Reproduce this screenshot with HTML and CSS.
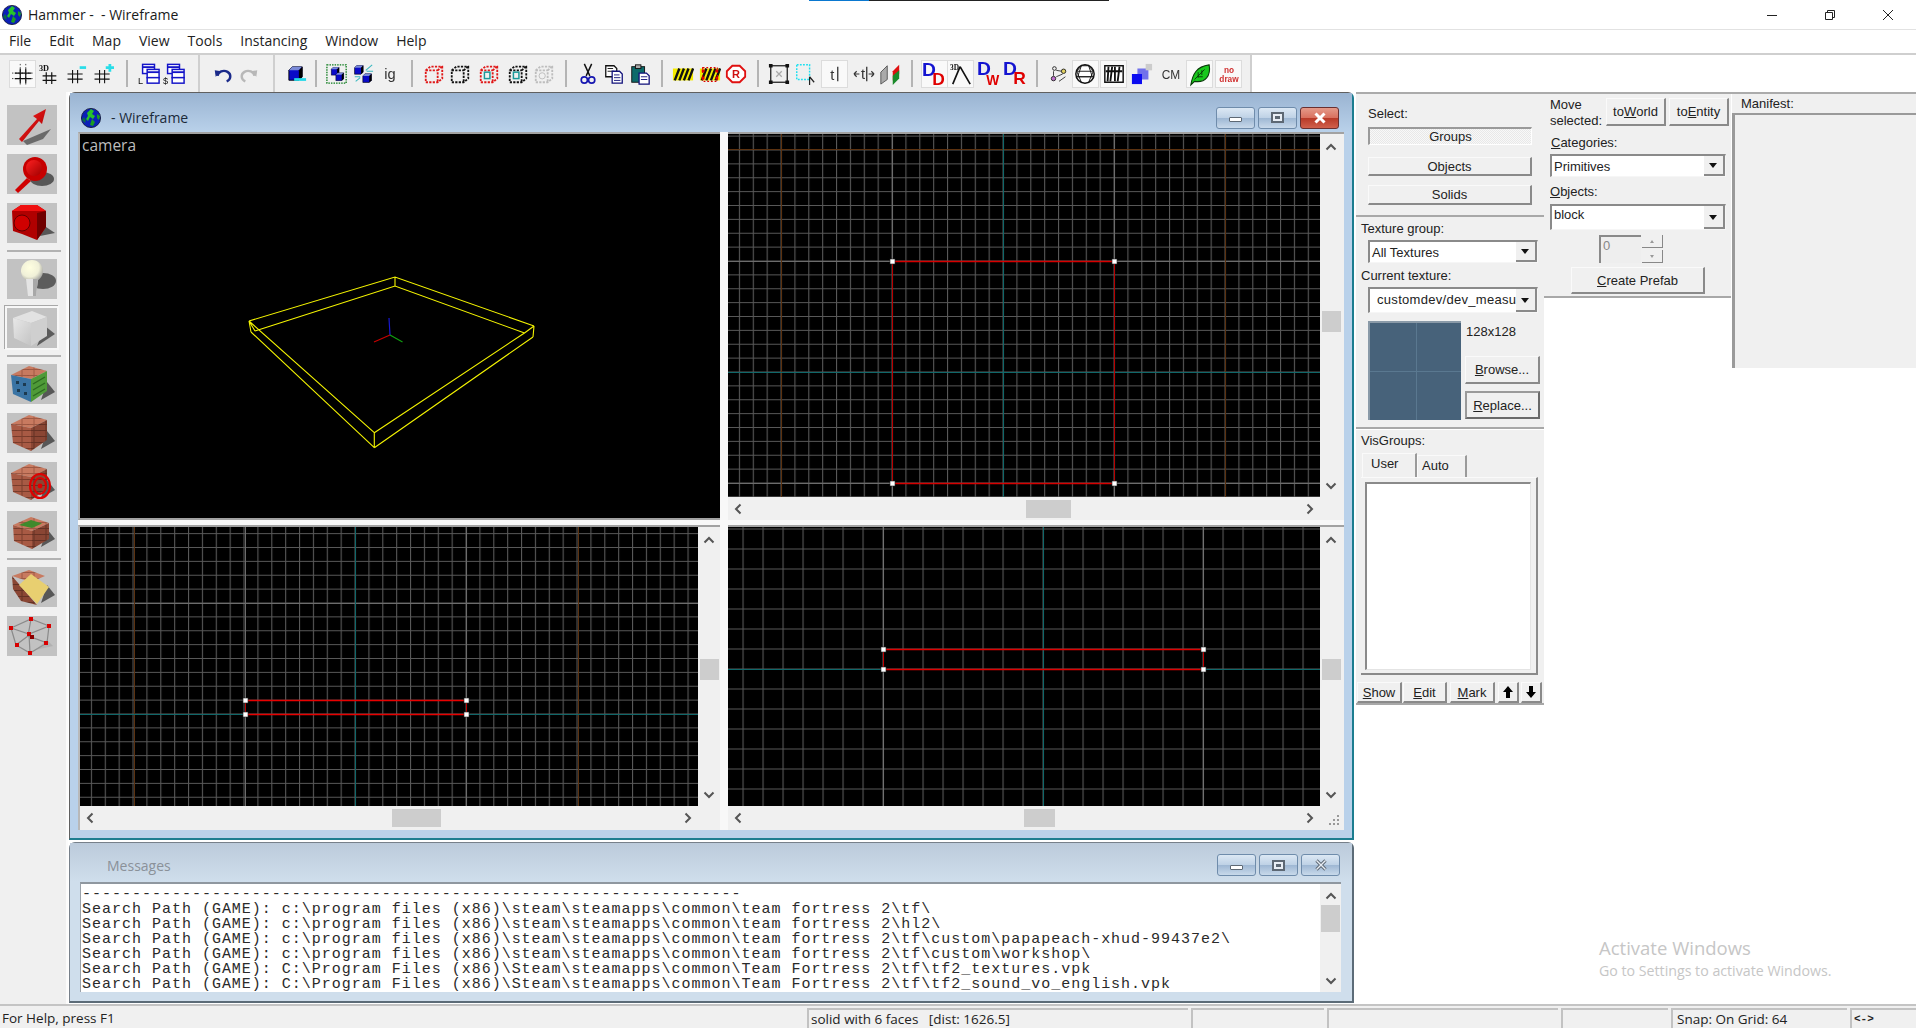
FILE: index.html
```html
<!DOCTYPE html>
<html lang="en">
<head>
<meta charset="utf-8">
<title>Hammer - - Wireframe</title>
<link rel="stylesheet" href="styles.css">
</head>
<body>
<svg class="defs" aria-hidden="true">
  <defs>
    <symbol id="globe" viewBox="0 0 20 20">
      <circle cx="10" cy="10" r="9.6" fill="#0b1fb8" stroke="#0a1030" stroke-width=".8"/>
      <path d="M10 1 L13 3 L11 6 L14 8 L12 11 L9 9 L7 13 L5 11 L7 8 L6 5 Z" fill="#27c22b"/>
      <path d="M11 11 L14 14 L12 18 L9 17 Z M16 6 L19 8 L18 12 L16 10 Z" fill="#1c9c22"/>
      <path d="M3 9 L1 12 L4 15 L5 12 Z" fill="#0a6a4a"/>
    </symbol>
    <symbol id="hash" viewBox="0 0 24 24">
      <path d="M9 6V22M15 6V22M3 11H21M3 17H21" stroke="#111" stroke-width="1.3" fill="none"/>
    </symbol>
    <symbol id="bluewin" viewBox="0 0 24 24">
      <rect x="5" y="1.5" width="13" height="10" fill="#fff" stroke="#1414c8" stroke-width="1.6"/>
      <path d="M5 4.5H18" stroke="#1414c8" stroke-width="2"/>
      <rect x="10" y="7" width="13" height="9" fill="#fff" stroke="#1414c8" stroke-width="1.6"/>
      <path d="M10 10H23" stroke="#1414c8" stroke-width="2"/>
      <rect x="10" y="16" width="13" height="6" fill="#fff" stroke="#1414c8" stroke-width="1.6"/>
    </symbol>
    <symbol id="bluecube" viewBox="0 0 14 14">
      <path d="M1 4 L4 1 H13 V10 L10 13 H1 Z" fill="#0a0ac8" stroke="#000" stroke-width=".8"/>
      <path d="M1 4 L4 1 H13 L10 4 Z" fill="#7a8ad8"/>
      <path d="M10 4 L13 1 V10 L10 13 Z" fill="#000"/>
    </symbol>
    <symbol id="dotcube" viewBox="0 0 24 24">
      <path d="M3 8 L8 4 H21 V17 L16 21 H3 Z M3 8 H16 V21 M16 8 L21 4" fill="none" stroke="currentColor" stroke-width="2" stroke-dasharray="2.4 1.4"/>
    </symbol>
    <symbol id="hatch" viewBox="0 0 24 24">
      <rect x="1" y="6" width="22" height="13" fill="#f5ec00"/>
      <path d="M3 19 L8 6 M8 19 L13 6 M13 19 L18 6 M18 19 L23 6" stroke="#111" stroke-width="2.6"/>
    </symbol>
    <symbol id="chev-u" viewBox="0 0 12 8"><path d="M1.5 6.5 L6 2 L10.5 6.5" fill="none" stroke="#555" stroke-width="2"/></symbol>
    <symbol id="chev-d" viewBox="0 0 12 8"><path d="M1.5 1.5 L6 6 L10.5 1.5" fill="none" stroke="#555" stroke-width="2"/></symbol>
    <symbol id="chev-l" viewBox="0 0 8 12"><path d="M6.5 1.5 L2 6 L6.5 10.5" fill="none" stroke="#555" stroke-width="2"/></symbol>
    <symbol id="chev-r" viewBox="0 0 8 12"><path d="M1.5 1.5 L6 6 L1.5 10.5" fill="none" stroke="#555" stroke-width="2"/></symbol>
    <pattern id="grid-a" width="13.875" height="13.875" patternUnits="userSpaceOnUse" x="274.5" y="237.5">
      <path d="M.5 0V13.875M0 .5H13.875" stroke="#585858" stroke-width="1.2" fill="none"/>
    </pattern>
    <pattern id="grid-b" width="13.875" height="13.875" patternUnits="userSpaceOnUse" x="274.5" y="186.5">
      <path d="M.5 0V13.875M0 .5H13.875" stroke="#585858" stroke-width="1.2" fill="none"/>
    </pattern>
    <pattern id="grid-c" width="20" height="20" patternUnits="userSpaceOnUse" x="14.5" y="1.5">
      <path d="M.5 0V20M0 .5H20" stroke="#585858" stroke-width="1.2" fill="none"/>
    </pattern>
    <linearGradient id="tile-top" x1="0" y1="0" x2="1" y2="1"><stop offset="0" stop-color="#e8e8e8"/><stop offset="1" stop-color="#c4c4c4"/></linearGradient>
    <linearGradient id="red-shade" x1="0" y1="0" x2="1" y2="1"><stop offset="0" stop-color="#ff2020"/><stop offset="1" stop-color="#a00000"/></linearGradient>
    <radialGradient id="white-ball" cx=".4" cy=".35" r=".7"><stop offset="0" stop-color="#ffffe0"/><stop offset=".6" stop-color="#f0f0d8"/><stop offset="1" stop-color="#999"/></radialGradient>
    <pattern id="brick" width="12" height="6" patternUnits="userSpaceOnUse">
      <rect width="12" height="6" fill="#a85a44"/>
      <path d="M0 5.5H12M3 0V5M9 5V6" stroke="#6e3626" stroke-width=".8"/>
    </pattern>
    <pattern id="brick-dark" width="12" height="6" patternUnits="userSpaceOnUse">
      <rect width="12" height="6" fill="#8a4634"/>
      <path d="M0 5.5H12M3 0V5M9 5V6" stroke="#5a2c20" stroke-width=".8"/>
    </pattern>
    <pattern id="brick-top" width="12" height="6" patternUnits="userSpaceOnUse">
      <rect width="12" height="6" fill="#c87a60"/>
      <path d="M0 5.5H12M3 0V5M9 5V6" stroke="#93503c" stroke-width=".8"/>
    </pattern>
  </defs>
</svg>

<div class="app">
  <header class="titlebar">
    <svg class="title-icon"><use href="#globe"/></svg>
    <span class="title-text">Hammer -  - Wireframe</span>
    <div class="caption-btns">
      <svg class="sys-glyph" viewBox="0 0 12 12"><path d="M1 6.5H11" stroke="#222" fill="none"/></svg>
      <svg class="sys-glyph" viewBox="0 0 12 12"><path d="M1.5 3.5H8.5V10.5H1.5ZM3.5 3.5V1.5H10.5V8.5H8.5" stroke="#222" fill="none"/></svg>
      <svg class="sys-glyph" viewBox="0 0 12 12"><path d="M1 1L11 11M11 1L1 11" stroke="#222" fill="none"/></svg>
    </div>
  </header>

  <nav class="menubar">
    <span>File</span><span>Edit</span><span>Map</span><span>View</span><span>Tools</span><span>Instancing</span><span>Window</span><span>Help</span>
  </nav>

  <div class="toolbar">
    <div class="tb hl"><svg viewBox="0 0 24 24"><use href="#hash" width="24" height="24"/><path d="M9 1V24M15 1V24M0 11H24M0 17H24" stroke="#111" stroke-width=".8" stroke-dasharray="1.5 2" fill="none"/></svg></div>
    <div class="tb"><svg viewBox="0 0 24 24"><text x="1" y="9" class="ico-bold">3D</text><path d="M9 10V23M15 10V23M5 14H20M5 19H20" stroke="#111" stroke-width="1.3"/></svg></div>
    <div class="tb"><svg viewBox="0 0 24 24"><use href="#hash" width="22" height="22" y="2"/><path d="M16 5H23" stroke="#2adde8" stroke-width="3"/></svg></div>
    <div class="tb"><svg viewBox="0 0 24 24"><use href="#hash" width="22" height="22" y="2"/><path d="M15 5H24M19.5 1V9.5" stroke="#2adde8" stroke-width="3"/></svg></div>
    <div class="sep"></div>
    <div class="tb"><svg viewBox="0 0 24 24"><use href="#bluewin" width="24" height="24"/><text x="0" y="23" class="ico-sm">L</text></svg></div>
    <div class="tb"><svg viewBox="0 0 24 24"><use href="#bluewin" width="24" height="24"/><text x="0" y="23" class="ico-sm">$</text></svg></div>
    <div class="band"></div>
    <div class="tb"><svg viewBox="0 0 24 24"><path d="M6 14 A7 6 0 1 1 16 20" fill="none" stroke="#1a2a8a" stroke-width="2.6"/><path d="M3 8 L10 9 L4 15 Z" fill="#1a2a8a"/></svg></div>
    <div class="tb"><svg viewBox="0 0 24 24"><path d="M18 14 A7 6 0 1 0 8 20" fill="none" stroke="#b8b8b8" stroke-width="2.6"/><path d="M21 8 L14 9 L20 15 Z" fill="#b8b8b8"/></svg></div>
    <div class="band"></div>
    <div class="tb"><svg viewBox="0 0 24 24"><use href="#bluecube" x="3" y="3" width="17" height="17"/><path d="M10 18H23" stroke="#20d8e8" stroke-width="3"/></svg></div>
    <div class="sep"></div>
    <div class="tb"><svg viewBox="0 0 24 24"><rect x="1" y="2" width="21" height="20" fill="none" stroke="#0a7a1a" stroke-width="1.4" stroke-dasharray="1.6 1.2"/><use href="#bluecube" x="5" y="4" width="10" height="10"/><use href="#bluecube" x="10" y="10" width="10" height="10"/></svg></div>
    <div class="tb"><svg viewBox="0 0 24 24"><use href="#bluecube" x="2" y="2" width="11" height="11"/><use href="#bluecube" x="11" y="11" width="11" height="11"/><path d="M15 8L22 2M16 9H23M3 15H9M4 20L9 16" stroke="#3ab8c0" stroke-width="1.2"/></svg></div>
    <div class="tb"><svg viewBox="0 0 24 24"><text x="12" y="17" class="ico-reg">ig</text></svg></div>
    <div class="sep"></div>
    <div class="tb red"><svg viewBox="0 0 24 24"><use href="#dotcube" width="24" height="24"/></svg></div>
    <div class="tb"><svg viewBox="0 0 24 24"><use href="#dotcube" width="24" height="24"/></svg></div>
    <div class="tb red"><svg viewBox="0 0 24 24"><use href="#dotcube" width="24" height="24"/><rect x="7" y="10" width="6" height="7" fill="none" stroke="#1a9a9a" stroke-width="1.6"/></svg></div>
    <div class="tb"><svg viewBox="0 0 24 24"><use href="#dotcube" width="24" height="24"/><rect x="7" y="10" width="6" height="7" fill="none" stroke="#1a9a9a" stroke-width="1.6"/></svg></div>
    <div class="tb faint"><svg viewBox="0 0 24 24"><use href="#dotcube" width="24" height="24"/><circle cx="10" cy="14" r="3.4" fill="none" stroke="#bbb"/></svg></div>
    <div class="sep"></div>
    <div class="tb"><svg viewBox="0 0 24 24"><path d="M8 1L14 14M16 1L10 14" stroke="#111" stroke-width="1.6" fill="none"/><circle cx="8" cy="18.5" r="3.4" fill="none" stroke="#1616b0" stroke-width="1.8"/><circle cx="16" cy="18.5" r="3.4" fill="none" stroke="#1616b0" stroke-width="1.8"/></svg></div>
    <div class="tb"><svg viewBox="0 0 24 24"><path d="M3 3H12L15 6V15H3Z" fill="#fff" stroke="#111" stroke-width="1.4"/><path d="M5 6H11M5 9H12" stroke="#111"/><path d="M10 9H18L21 12V22H10Z" fill="#fff" stroke="#10107a" stroke-width="1.4"/><path d="M12 13H18M12 16H19M12 19H19" stroke="#10107a"/></svg></div>
    <div class="tb"><svg viewBox="0 0 24 24"><rect x="3" y="4" width="14" height="17" fill="#0c6a6a" stroke="#111"/><rect x="7" y="2" width="6" height="4" fill="#aaa" stroke="#111"/><path d="M11 11H19L22 14V23H11Z" fill="#fff" stroke="#10107a" stroke-width="1.4"/><path d="M13 15H20M13 18H20" stroke="#10107a"/></svg></div>
    <div class="sep"></div>
    <div class="tb"><svg viewBox="0 0 24 24"><use href="#hatch" width="24" height="24"/></svg></div>
    <div class="tb"><svg viewBox="0 0 24 24"><use href="#hatch" width="24" height="24"/><path d="M3 7h3v3h-3zM18 7h3v3h-3zM3 15h3v3h-3zM18 15h3v3h-3z" fill="#e00000"/><path d="M4 5H20V20H4Z" fill="none" stroke="#e00000" stroke-width="1.2" stroke-dasharray="2 2"/></svg></div>
    <div class="tb"><svg viewBox="0 0 24 24"><path d="M8 3H16L22 9V15L16 21H8L2 15V9Z" fill="#fff" stroke="#e01010" stroke-width="2"/><text x="12" y="16" class="ico-r">R</text></svg></div>
    <div class="sep"></div>
    <div class="tb"><svg viewBox="0 0 24 24"><rect x="3" y="3" width="18" height="18" fill="none" stroke="#222" stroke-width="1.4"/><path d="M9 9L15 15M15 9L9 15" stroke="#aaa" stroke-width="1.4"/><path d="M1 1h4v4h-4zM19 1h4v4h-4zM1 19h4v4h-4zM19 19h4v4h-4z" fill="#111"/></svg></div>
    <div class="tb"><svg viewBox="0 0 24 24"><rect x="3" y="2" width="14" height="16" fill="none" stroke="#1fe0f0" stroke-width="1.6" stroke-dasharray="2 1.4"/><path d="M17 15V24M17 15L22 21" stroke="#222" stroke-width="1.3" fill="none"/></svg></div>
    <div class="tb hl"><svg viewBox="0 0 24 24"><text x="9" y="18" class="ico-reg">t</text><path d="M15 4V20" stroke="#333" stroke-width="1.4"/></svg></div>
    <div class="tb"><svg viewBox="0 0 24 24"><text x="11" y="17" class="ico-reg">t</text><path d="M15 4V20" stroke="#333" stroke-width="1.4"/><path d="M1 12H7M1 12L4 9M1 12L4 15M17 12H23M23 12L20 9M23 12L20 15" stroke="#333" stroke-width="1.2" fill="none"/></svg></div>
    <div class="tb"><svg viewBox="0 0 24 24"><path d="M2 10L9 3V18L2 23Z" fill="#aaa" stroke="#555"/><path d="M15 9L22 2V12L15 19Z" fill="#e01010"/><path d="M15 14L22 8V17L15 24Z" fill="#1a8a2a"/></svg></div>
    <div class="sep"></div>
    <div class="tb hl"><svg viewBox="0 0 24 24"><text x="-1" y="14" class="ico-blue">D</text><text x="10" y="24" class="ico-red">D</text></svg></div>
    <div class="tb hl"><svg viewBox="0 0 24 24"><text x="0" y="8" class="ico-3d">3D</text><path d="M11 4L3 23M11 4L22 23" stroke="#111" stroke-width="1.8" fill="none"/></svg></div>
    <div class="tb"><svg viewBox="0 0 24 24"><text x="-1" y="13" class="ico-blue">D</text><text x="9" y="24" class="ico-red-w">W</text></svg></div>
    <div class="tb"><svg viewBox="0 0 24 24"><text x="-1" y="13" class="ico-blue">D</text><text x="10" y="23" class="ico-red">R</text></svg></div>
    <div class="sep"></div>
    <div class="tb"><svg viewBox="0 0 24 24"><circle cx="7" cy="6" r="2" fill="none" stroke="#222"/><circle cx="17" cy="9" r="2.4" fill="#e0d060" stroke="#222"/><circle cx="6" cy="17" r="2.4" fill="#c070d0" stroke="#222"/><path d="M9 8L15 9M16 12L9 15M6 9V14M12 20L19 15" stroke="#333" fill="none"/></svg></div>
    <div class="tb hl"><svg viewBox="0 0 24 24"><circle cx="12" cy="12" r="10" fill="#fff" stroke="#111" stroke-width="1.6"/><path d="M3 9H21M3 15H21M8 3L3 9L8 21M16 3L21 9L16 21M8 3H16L20 15H4Z" fill="none" stroke="#111"/></svg></div>
    <div class="tb hl"><svg viewBox="0 0 24 24"><rect x="2" y="3" width="20" height="18" fill="#fff" stroke="#111" stroke-width="1.6"/><path d="M6 4L5 20M10 4L8 20M13 4L13 20M18 4L16 20M3 9L21 9" stroke="#111" stroke-width="2"/></svg></div>
    <div class="tb"><svg viewBox="0 0 24 24"><rect x="1" y="12" width="11" height="11" fill="#0c0cf0"/><path d="M7 6H19V18H12V12H7Z" fill="#3a3ae8" opacity=".7"/><rect x="16" y="1" width="7" height="7" fill="#ccc"/></svg></div>
    <div class="tb"><svg viewBox="0 0 24 24"><text x="12" y="17" class="ico-cm">CM</text></svg></div>
    <div class="tb hl"><svg viewBox="0 0 24 24"><path d="M2 24C4 12 8 4 22 2C24 14 18 22 6 20Z" fill="#18c81c" stroke="#0a3a0a" stroke-width="1.2"/><path d="M6 18L17 7M10 10V16M14 8V13M9 15H15" stroke="#0a3a0a" fill="none"/></svg></div>
    <div class="tb hl"><svg viewBox="0 0 24 24"><text x="12" y="11" class="ico-nd">no</text><text x="12" y="21" class="ico-nd">draw</text></svg></div>
  </div>

  <main class="workspace">
    <aside class="tools">
      <div class="tool"><svg viewBox="0 0 50 40"><path d="M16 36 L44 24 L36 34 L20 40 Z" fill="#444" opacity=".7"/><path d="M12 34 L30 14 L26 11 L39 4 L35 19 L32 16 L15 37 Z" fill="url(#red-shade)"/></svg></div>
      <div class="tool"><svg viewBox="0 0 50 40"><ellipse cx="35" cy="25" rx="12" ry="7" fill="#333" opacity=".75"/><path d="M8 36 L20 24 L24 27 L11 39 Z" fill="#d00000"/><circle cx="28" cy="15" r="12" fill="#c60000"/><circle cx="27" cy="14" r="8" fill="url(#red-shade)"/></svg></div>
      <div class="tool"><svg viewBox="0 0 50 40"><path d="M28 34 L48 30 L36 22 Z" fill="#333" opacity=".75"/><path d="M5 8 L14 2 H30 L39 8 V24 L30 37 L15 31 L6 28 Z" fill="#b00000"/><path d="M5 8 H30 L39 8 L30 2 H14 Z" fill="#ef1010"/><path d="M30 10 L39 8 V24 L30 37 Z" fill="#700000"/><circle cx="15" cy="20" r="8" fill="#d00000" stroke="#600000"/></svg></div>
      <div class="tool-sep"></div>
      <div class="tool"><svg viewBox="0 0 50 40"><ellipse cx="36" cy="22" rx="13" ry="8" fill="#3a3a3a" opacity=".75"/><circle cx="25" cy="12" r="11" fill="url(#white-ball)"/><path d="M19 20 H31 L29 37 H21 Z" fill="#e4e4e4"/><path d="M26 20 H31 L29 37 H26 Z" fill="#a8a8a8"/></svg></div>
      <div class="tool active"><svg viewBox="0 0 50 40"><path d="M30 38 L48 26 L38 18 Z" fill="#3a3a3a" opacity=".75"/><path d="M6 10 L25 3 L40 9 L24 15 Z" fill="#e2e2e2"/><path d="M6 10 L24 15 L24 38 L7 30 Z" fill="url(#tile-top)"/><path d="M24 15 L40 9 V28 L24 38 Z" fill="#cfcfcf"/></svg></div>
      <div class="tool-sep"></div>
      <div class="tool"><svg viewBox="0 0 50 40"><path d="M34 36 L48 28 L40 18 Z" fill="#333" opacity=".75"/><path d="M4 11 L22 2 L40 7 L24 15 Z" fill="url(#brick-top)"/><path d="M4 11 L24 15 V38 L6 30 Z" fill="#3a74a4"/><path d="M24 15 L40 7 V27 L24 38 Z" fill="#4f9a38"/><path d="M9 17h3v3h-3zM16 19h3v3h-3zM10 25h3v3h-3zM17 28h3v3h-3z" fill="#1c3a50"/><path d="M26 20 L38 13 M26 26 L38 19 M26 32 L38 25" stroke="#2c6a20" stroke-width="1.4"/></svg></div>
      <div class="tool"><svg viewBox="0 0 50 40"><path d="M34 36 L48 28 L40 18 Z" fill="#333" opacity=".75"/><path d="M4 11 L22 2 L40 7 L24 15 Z" fill="url(#brick-top)"/><path d="M4 11 L24 15 V38 L6 30 Z" fill="url(#brick)"/><path d="M24 15 L40 7 V27 L24 38 Z" fill="url(#brick-dark)"/></svg></div>
      <div class="tool"><svg viewBox="0 0 50 40"><path d="M34 36 L48 28 L40 18 Z" fill="#333" opacity=".75"/><path d="M4 11 L22 2 L40 7 L24 15 Z" fill="url(#brick-top)"/><path d="M4 11 L24 15 V38 L6 30 Z" fill="url(#brick)"/><path d="M24 15 L40 7 V27 L24 38 Z" fill="url(#brick-dark)"/><ellipse cx="33" cy="24" rx="10" ry="12" fill="none" stroke="#e00000" stroke-width="2"/><ellipse cx="33" cy="24" rx="6" ry="8" fill="none" stroke="#e00000" stroke-width="2"/><circle cx="33" cy="24" r="2.4" fill="#e00000"/></svg></div>
      <div class="tool"><svg viewBox="0 0 50 40"><path d="M34 36 L48 28 L40 18 Z" fill="#333" opacity=".75"/><path d="M6 14 L24 6 L42 12 L25 20 Z" fill="url(#brick-top)"/><path d="M12 14 L24 9 L35 12.5 L25 17 Z" fill="#3f8a2c"/><path d="M6 14 L25 20 V38 L7 30 Z" fill="url(#brick)"/><path d="M25 20 L42 12 V28 L25 38 Z" fill="url(#brick-dark)"/></svg></div>
      <div class="tool-sep"></div>
      <div class="tool"><svg viewBox="0 0 50 40"><path d="M34 36 L48 28 L40 18 Z" fill="#333" opacity=".75"/><path d="M5 9 L22 3 L38 9 L24 15 Z" fill="url(#brick-top)"/><path d="M5 9 L30 38 L14 34 L6 22 Z" fill="url(#brick-dark)"/><path d="M24 7 L42 20 L30 37 L12 18 Z" fill="#e8cf70"/></svg></div>
      <div class="tool"><svg viewBox="0 0 50 40"><g fill="none" stroke="#8a8a8a" stroke-width="1.2"><path d="M4 12 L24 3 L42 10 L22 18 Z"/><path d="M9 29 L23 37 L40 27 L21 20 Z"/><path d="M4 12 L9 29M24 3 L21 20M42 10 L40 27M22 18 L23 37"/></g><path d="M28 34 L46 30 L40 24 Z" fill="#999" opacity=".4"/><g fill="#d80000"><rect x="2" y="10" width="4" height="4"/><rect x="22" y="1" width="4" height="4"/><rect x="40" y="8" width="4" height="4"/><rect x="20" y="16" width="4" height="4"/><rect x="8" y="27" width="4" height="4"/><rect x="23" y="19" width="4" height="4" fill="#8a0000"/><rect x="37" y="25" width="4" height="4"/><rect x="21" y="35" width="4" height="4"/></g></svg></div>
    </aside>

    <section class="mdi">
      <article class="win win-main">
        <div class="win-title">
          <svg class="win-icon"><use href="#globe"/></svg>
          <span class="win-label">- Wireframe</span>
          <div class="win-btns">
            <button class="cap"><i class="g-min"></i></button>
            <button class="cap"><i class="g-max"></i></button>
            <button class="cap close"><svg viewBox="0 0 14 12"><path d="M2.5 1.5L11.5 10.5M11.5 1.5L2.5 10.5" stroke="#fff" stroke-width="3"/></svg></button>
          </div>
        </div>
        <div class="client">
          <div class="pane camera">
            <svg class="view" viewBox="0 0 640 384">
              <text x="2" y="17" class="cam-label">camera</text>
              <path d="M169 187L315 143L454 192M175 197L315 152L444.5 199M169 187L294.3 298.7M171 198L294.3 313.7M444.5 199L294.3 298.7M453 203L294.3 313.7M315 143V152M294.3 298.7V313.7M169 187L171 198M454 192L453 203M169 187L175 197M444.5 199L454 192" fill="none" stroke="#f4f400" stroke-width="1.1"/>
              <path d="M310 201L309 184" stroke="#1818d0" stroke-width="1.2"/>
              <path d="M310 201L294 208" stroke="#c80000" stroke-width="1.2"/>
              <path d="M310 201L322.5 208" stroke="#10a010" stroke-width="1.2"/>
            </svg>
          </div>
          <div class="pane view2d pane-tr">
            <svg class="view" viewBox="0 0 592 363">
              <rect width="592" height="363" fill="url(#grid-a)"/>
              <path d="M164.5 0V363M386.5 0V363M0 127.5H592M0 349.5H592" stroke="#6c6c6c"/>
              <path d="M53.5 0V363M497.5 0V363M0 15.5H592" stroke="#5c3210"/>
              <path d="M275.5 0V363M0 238.5H592" stroke="#10686a"/>
              <path d="M164.5 127.5H386.5M164.5 349.5H386.5" stroke="#d80000" stroke-width="1.4"/>
              <path d="M164.5 127.5V349.5M386.5 127.5V349.5" stroke="#b80000"/>
              <g class="handles"><rect x="162" y="125" width="5" height="5"/><rect x="384" y="125" width="5" height="5"/><rect x="162" y="347" width="5" height="5"/><rect x="384" y="347" width="5" height="5"/></g>
            </svg>
            <div class="vbar"><svg class="chv"><use href="#chev-u"/></svg><div class="thumb-v"></div><svg class="chv"><use href="#chev-d"/></svg></div>
            <div class="hbar"><svg class="chh"><use href="#chev-l"/></svg><div class="thumb-h"></div><svg class="chh"><use href="#chev-r"/></svg></div>
          </div>
          <div class="pane view2d pane-bl">
            <svg class="view" viewBox="0 0 618 279">
              <rect width="618" height="279" fill="url(#grid-b)"/>
              <path d="M165.5 0V279M386.5 0V279M0 76.5H618" stroke="#6c6c6c"/>
              <path d="M54.5 0V279M498.5 0V279" stroke="#5c3210"/>
              <path d="M275.5 0V279M0 187.5H618" stroke="#10686a"/>
              <path d="M165.5 173.5H386.5M165.5 187.5H386.5" stroke="#e80000" stroke-width="1.4"/>
              <path d="M165.5 173.5V187.5M386.5 173.5V187.5" stroke="#b80000"/>
              <g class="handles"><rect x="163" y="171" width="5" height="5"/><rect x="384" y="171" width="5" height="5"/><rect x="163" y="185" width="5" height="5"/><rect x="384" y="185" width="5" height="5"/></g>
            </svg>
            <div class="vbar"><svg class="chv"><use href="#chev-u"/></svg><div class="thumb-v"></div><svg class="chv"><use href="#chev-d"/></svg></div>
            <div class="hbar"><svg class="chh"><use href="#chev-l"/></svg><div class="thumb-h"></div><svg class="chh"><use href="#chev-r"/></svg></div>
          </div>
          <div class="pane view2d pane-br">
            <svg class="view" viewBox="0 0 592 279">
              <rect width="592" height="279" fill="url(#grid-c)"/>
              <path d="M155.5 0V279M475.5 0V279" stroke="#707070"/>
              <path d="M315.5 0V279M0 142.5H592" stroke="#10686a"/>
              <path d="M155.5 122.5H475.5M155.5 142.5H475.5" stroke="#e00000" stroke-width="1.4"/>
              <path d="M155.5 122.5V142.5M475.5 122.5V142.5" stroke="#c00000"/>
              <g class="handles"><rect x="153" y="120" width="5" height="5"/><rect x="473" y="120" width="5" height="5"/><rect x="153" y="140" width="5" height="5"/><rect x="473" y="140" width="5" height="5"/></g>
            </svg>
            <div class="vbar"><svg class="chv"><use href="#chev-u"/></svg><div class="thumb-v"></div><svg class="chv"><use href="#chev-d"/></svg></div>
            <div class="hbar"><svg class="chh"><use href="#chev-l"/></svg><div class="thumb-h"></div><svg class="chh"><use href="#chev-r"/></svg></div>
            <svg class="grip" viewBox="0 0 12 12"><path d="M9 1h2v2h-2zM5 5h2v2h-2zM9 5h2v2h-2zM1 9h2v2h-2zM5 9h2v2h-2zM9 9h2v2h-2z" fill="#999"/></svg>
          </div>
        </div>
      </article>

      <article class="win win-msg">
        <div class="win-title">
          <span class="win-label">Messages</span>
          <div class="win-btns">
            <button class="cap"><i class="g-min"></i></button>
            <button class="cap"><i class="g-max"></i></button>
            <button class="cap"><svg viewBox="0 0 14 12"><path d="M2.5 1.5L11.5 10.5M11.5 1.5L2.5 10.5" stroke="#5d6874" stroke-width="3.2"/><path d="M2.5 1.5L11.5 10.5M11.5 1.5L2.5 10.5" stroke="#e8eef5" stroke-width="1.4"/></svg></button>
          </div>
        </div>
        <div class="log">
          <pre class="log-text">------------------------------------------------------------------
Search Path (GAME): c:\program files (x86)\steam\steamapps\common\team fortress 2\tf\
Search Path (GAME): c:\program files (x86)\steam\steamapps\common\team fortress 2\hl2\
Search Path (GAME): c:\program files (x86)\steam\steamapps\common\team fortress 2\tf\custom\papapeach-xhud-99437e2\
Search Path (GAME): c:\program files (x86)\steam\steamapps\common\team fortress 2\tf\custom\workshop\
Search Path (GAME): C:\Program Files (x86)\Steam\steamapps\common\Team Fortress 2\tf\tf2_textures.vpk
Search Path (GAME): C:\Program Files (x86)\Steam\steamapps\common\Team Fortress 2\tf\tf2_sound_vo_english.vpk</pre>
          <div class="log-bar"><svg class="chv"><use href="#chev-u"/></svg><div class="log-thumb"></div><svg class="chv"><use href="#chev-d"/></svg></div>
        </div>
      </article>
    </section>

    <section class="side">
      <div class="col col-left">
        <div class="panel select-panel">
          <div class="lbl">Select:</div>
          <button class="wbtn sel-groups">Groups</button>
          <button class="wbtn sel-objects">Objects</button>
          <button class="wbtn sel-solids">Solids</button>
        </div>
        <div class="panel texture-panel">
          <div class="lbl">Texture group:</div>
          <div class="combo combo-tex"><span class="combo-val">All Textures</span><span class="combo-arrow"></span></div>
          <div class="lbl lbl-cur">Current texture:</div>
          <div class="combo combo-cur"><span class="combo-val indent">customdev/dev_measu</span><span class="combo-arrow"></span></div>
          <div class="tex-row">
            <div class="tex-preview"></div>
            <div class="tex-side">
              <div class="tex-size">128x128</div>
              <button class="wbtn tex-browse"><u>B</u>rowse...</button>
              <button class="wbtn tex-replace"><u>R</u>eplace...</button>
            </div>
          </div>
        </div>
        <div class="panel vis-panel">
          <div class="lbl">VisGroups:</div>
          <div class="tabs"><span class="tab tab-on">User</span><span class="tab">Auto</span></div>
          <div class="vis-box"><div class="vis-list"></div></div>
          <div class="vis-btns">
            <button class="wbtn v-show"><u>S</u>how</button>
            <button class="wbtn v-edit"><u>E</u>dit</button>
            <button class="wbtn v-mark"><u>M</u>ark</button>
            <button class="wbtn v-arrow"><svg viewBox="0 0 12 14"><path d="M6 1L11 7H8V13H4V7H1Z" fill="#000"/></svg></button>
            <button class="wbtn v-arrow"><svg viewBox="0 0 12 14"><path d="M6 13L11 7H8V1H4V7H1Z" fill="#000"/></svg></button>
          </div>
        </div>
      </div>

      <div class="col col-mid">
        <div class="panel move-panel">
          <div class="move-row">
            <div class="move-lbl">Move<br>selected:</div>
            <button class="wbtn mv-world">to<u>W</u>orld</button>
            <button class="wbtn mv-entity">to<u>E</u>ntity</button>
          </div>
          <div class="lbl lbl-cat"><u>C</u>ategories:</div>
          <div class="combo combo-cat"><span class="combo-val">Primitives</span><span class="combo-arrow"></span></div>
          <div class="lbl lbl-obj"><u>O</u>bjects:</div>
          <div class="combo combo-obj"><span class="combo-val up">block</span><span class="combo-arrow"></span></div>
          <div class="spin-row">
            <div class="spin-edit">0</div>
            <div class="spin-btns"><span class="spin-b"><i class="tri-up"></i></span><span class="spin-b"><i class="tri-dn"></i></span></div>
          </div>
          <button class="wbtn prefab"><u>C</u>reate Prefab</button>
        </div>
      </div>

      <div class="col col-right">
        <div class="manifest-head">Manifest:</div>
        <div class="manifest-body"></div>
      </div>
    </section>
  </main>

  <footer class="status">
    <div class="st st-plain">For Help, press F1</div>
    <div class="st">solid with 6 faces   [dist: 1626.5]</div>
    <div class="st"></div>
    <div class="st"></div>
    <div class="st"></div>
    <div class="st st-snap">Snap: On Grid: 64</div>
    <div class="st st-mono">&lt;-&gt;</div>
  </footer>

  <div class="watermark">
    <div class="wm-big">Activate Windows</div>
    <div class="wm-small">Go to Settings to activate Windows.</div>
  </div>
  <div class="loadbar"></div>
</div>
</body>
</html>
```

FILE: styles.css
```css
* { box-sizing: border-box; }
html, body { margin: 0; padding: 0; background: #fff; }
body { width: 1916px; height: 1028px; overflow: hidden; font-family: "Liberation Sans", Arial, sans-serif; font-size: 13px; color: #111; }
.defs { display: block; width: 0; height: 0; overflow: hidden; }
button { font: inherit; color: inherit; padding: 0; margin: 0; }

.app { position: relative; width: 1916px; height: 1028px; display: flex; flex-direction: column; overflow: hidden; }

/* title + menu */
.titlebar { height: 30px; flex: none; display: flex; align-items: center; padding-left: 2px; border-bottom: 1px solid #e2e2e2; background: #fff; }
.title-icon { width: 20px; height: 20px; flex: none; }
.title-text { margin-left: 6px; font-family: "Open Sans", sans-serif; font-size: 14px; white-space: pre; color: #1a1a1a; }
.caption-btns { margin-left: auto; display: flex; }
.sys-glyph { width: 12px; height: 12px; }
.caption-btns .sys-glyph:nth-child(1) { margin-right: 23px; }
.caption-btns .sys-glyph:nth-child(2) { margin-left: 23px; margin-right: 23px; }
.caption-btns .sys-glyph:nth-child(3) { margin-left: 23px; margin-right: 22px; }

.menubar { height: 25px; flex: none; display: flex; align-items: center; gap: 18px; padding: 0 0 2px 9px; border-bottom: 2px solid #cfcfcf; font-family: "Open Sans", sans-serif; font-size: 14px; color: #222; background: #fff; }

/* toolbar */
.toolbar { height: 37px; width: 1252px; flex: none; display: grid; align-items: center; justify-items: center; background: #f0f0f0; border-right: 2px solid #cfcfcf; padding-left: 9px;
  grid-template-columns: 27px 26.25px 28px 25.75px 21px 24.25px 26px 22.75px 25.5px 26px 24px 21.25px 18.5px 23.75px 28.5px 24px 20px 24.5px 28.5px 28.75px 28.5px 23.75px 20px 24.5px 27.5px 24px 20px 23.5px 29px 24.5px 19px 23.25px 29px 29.75px 28.5px 23.5px 20.5px 24.5px 28px 28.75px 24px 20px 24px 28.25px 28.5px 28.3px 29px 29.2px 29px; }
.tb { width: 27px; height: 28px; display: flex; align-items: center; justify-content: center; }
.tb svg { width: 22px; height: 22px; overflow: visible; filter: blur(.25px); }
.tb.hl { background: #f9f9f9; border: 1px solid #dcdcdc; }
.tb.red { color: #e01818; }
.tb.faint { color: #bdbdbd; }
.sep { width: 2px; height: 27px; background: #b4b4b4; }
.band { width: 2px; height: 37px; background: #cfcfcf; }
.ico-bold { font: bold 9px "Liberation Serif", serif; fill: #111; }
.ico-sm { font: 10px "Liberation Sans", sans-serif; fill: #111; }
.ico-reg { font: 16px "Liberation Sans", sans-serif; fill: #333; text-anchor: middle; }
.ico-r { font: bold 12px "Liberation Sans", sans-serif; fill: #d01010; text-anchor: middle; }
.ico-blue { font: bold 21px "Liberation Sans", sans-serif; fill: #1414d0; }
.ico-red { font: bold 19px "Liberation Sans", sans-serif; fill: #e00000; }
.ico-red-w { font: bold 15px "Liberation Sans", sans-serif; fill: #e00000; }
.ico-3d { font: bold 8px "Liberation Serif", serif; fill: #111; }
.ico-cm { font: 13px "Liberation Sans", sans-serif; fill: #333; text-anchor: middle; }
.ico-nd { font: bold 9px "Liberation Sans", sans-serif; fill: #d03030; text-anchor: middle; }

/* workspace */
.workspace { flex: 1; min-height: 0; display: flex; }

.tools { width: 68px; flex: none; background: #f0f0f0; display: flex; flex-direction: column; align-items: flex-start; padding: 13px 0 0 7px; border-right: 2px solid #fbfbfb; }
.tool { width: 50px; height: 40px; background: #c2c2c2; margin-bottom: 9px; flex: none; }
.tool svg { display: block; width: 50px; height: 40px; filter: blur(.6px); }
.tool.active { outline: 1px dotted #f8f8f8; box-shadow: 0 0 0 2px #f7f7f7, -1px -1px 0 2px #a8a8a8; }
.tool-sep { width: 54px; height: 2px; margin: -2px 0 7px 0; background: #b2b2b2; flex: none; }

.mdi { width: 1288px; flex: none; display: flex; flex-direction: column; gap: 2px; padding-left: 1px; padding-right: 2px; }
.win { background: #b9d1ea; border: 1px solid #606060; border-radius: 6px 6px 0 0; border-right: 2px solid #1c7d90; border-bottom: 2px solid #1c7d90; display: flex; flex-direction: column; }
.win-main { height: 748px; }
.win-msg { height: 161px; background: #cfdeec; border-color: #77808a; border-right-color: #5c6c78; border-bottom-color: #5c6c78; }
.win-title { flex: none; height: 39px; display: flex; align-items: center; padding: 10px 0 0 11px; background: linear-gradient(#9ab4d2, #b9d1ea); }
.win-msg .win-title { padding: 5px 0 0 37px; background: linear-gradient(#bccbdb, #cfdeec); }
.win-icon { width: 20px; height: 20px; }
.win-label { margin-left: 10px; font-family: "Open Sans", sans-serif; font-size: 14px; color: #1b2a3a; }
.win-msg .win-label { margin-left: 0; color: #8a9199; }
.win-btns { margin-left: auto; display: flex; gap: 3px; padding-right: 12px; }
.win-main .win-btns { padding-right: 13px; }
.cap { width: 39px; height: 22px; border: 1px solid #6f8cab; border-radius: 3px; background: linear-gradient(#dce8f4 0, #bfd2e6 48%, #9fb8d4 52%, #c8d9ea 100%); display: flex; align-items: center; justify-content: center; }
.cap.close { background: linear-gradient(#e49a8a 0, #d9715f 48%, #b83a28 52%, #d0604c 100%); border-color: #6a3030; }
.cap svg { width: 14px; height: 12px; }
.g-min { display: block; width: 13px; height: 5px; margin-top: 4px; background: #fff; border: 1px solid #5d6874; border-radius: 1px; }
.g-max { display: block; width: 13px; height: 11px; background: #c8d9ea; border: 2px solid #5d6874; box-shadow: inset 0 0 0 2px #e8eef5, inset 0 0 0 4px #5d6874; }

.client { flex: 1; min-height: 0; margin: 0 8px 8px 8px; display: grid; grid-template-columns: 642px 616px; grid-template-rows: 388px 305px; column-gap: 8px; row-gap: 5px; background: #f8f8f8; width: 1266px; }

.pane { position: relative; min-width: 0; min-height: 0; background: #f0f0f0; border-top: 2px solid #a2a2a2; border-left: 2px solid #b8b8b8; }
.view { display: block; background: #000; }
.camera { border-bottom: 2px solid #a2a2a2; }
.camera .view { width: 640px; height: 384px; }
.cam-label { font: 15.5px "Open Sans", sans-serif; fill: #bdbdbd; }
.view2d { display: grid; }
.view2d .view { width: 100%; height: 100%; }
.handles rect { fill: #fff; stroke: #222; stroke-width: .6; }
.pane-tr { grid-template-columns: 592px 22px; grid-template-rows: 363px 23px; border-left: 0; }
.pane-bl { grid-template-columns: 618px 22px; grid-template-rows: 279px 24px; }
.pane-br { grid-template-columns: 592px 22px; grid-template-rows: 279px 24px; border-left: 0; }

.vbar { display: flex; flex-direction: column; align-items: center; justify-content: flex-start; background: #f0f0f0; padding: 9px 0 7px; }
.hbar { display: flex; align-items: center; background: #f0f0f0; padding: 0 6px; grid-column: 1 / span 1; }
.chv { width: 12px; height: 8px; flex: none; }
.chh { width: 8px; height: 12px; flex: none; }
.vbar .chv:last-child, .log-bar .chv:last-child { margin-top: auto; }
.hbar .chh:last-child { margin-left: auto; }
.thumb-v { width: 19px; height: 21px; background: #cdcdcd; flex: none; margin-top: 160px; }
.pane-bl .thumb-v, .pane-br .thumb-v { margin-top: 115px; }
.thumb-h { height: 18px; background: #cdcdcd; flex: none; }
.pane-tr .thumb-h { width: 45px; margin-left: 284px; }
.pane-bl .thumb-h { width: 49px; margin-left: 298px; }
.pane-br .thumb-h { width: 31px; margin-left: 282px; }
.grip { position: absolute; right: 4px; bottom: 4px; width: 12px; height: 12px; }

.log { flex: 1; min-height: 0; margin: 0 11px 9px 10px; display: flex; background: #fff; border-top: 2px solid #8f979f; border-left: 1px solid #9aa2aa; }
.log-text { margin: 0; flex: 1; min-width: 0; height: 108px; overflow: hidden; padding: 3px 0 0 1px; font-family: "Liberation Mono", "Courier New", monospace; font-size: 15px; line-height: 15px; letter-spacing: .99px; color: #2a2a2a; }
.log-bar { width: 21px; flex: none; background: #f0f0f0; display: flex; flex-direction: column; align-items: center; padding: 8px 0 7px; }
.log-thumb { width: 19px; height: 27px; background: #cdcdcd; margin-top: 5px; flex: none; }

/* side */
.side { flex: 1; min-width: 0; display: flex; align-items: flex-start; border-top: 2px solid #ababab; height: 100%; }
.col { flex: none; }
.col-left { width: 188px; }
.col-mid { width: 187px; }
.col-right { width: 185px; }
.panel { background: #f0f0f0; border-bottom: 2px solid #a8a8a8; }
.lbl { line-height: 16px; color: #222; white-space: nowrap; }
.wbtn { display: flex; align-items: center; justify-content: center; background: #f0f0f0; border: 0; border-right: 2px solid #8a8a8a; border-bottom: 2px solid #8a8a8a; border-top: 1px solid #fafafa; border-left: 1px solid #fafafa; color: #222; white-space: nowrap; }

.select-panel { height: 123px; padding: 12px 0 0 12px; }
.select-panel .wbtn { width: 164px; }
.sel-groups { height: 18px; margin-top: 5px; border: 0; border-top: 2px solid #9a9a9a; border-left: 2px solid #9a9a9a; border-right: 1px solid #fff; border-bottom: 1px solid #fff; background: repeating-conic-gradient(#e8e8e8 0 25%, #f8f8f8 0 50%) 0 0 / 2px 2px; }
.sel-objects { height: 19px; margin-top: 12px; }
.sel-solids { height: 20px; margin-top: 9px; }

.texture-panel { height: 212px; padding: 4px 5px 0 5px; }
.combo { display: flex; align-items: stretch; background: #fff; border-top: 2px solid #8a8a8a; border-left: 2px solid #8a8a8a; border-right: 1px solid #f6f6f6; border-bottom: 1px solid #f6f6f6; overflow: hidden; }
.combo-val { flex: 1; min-width: 0; overflow: hidden; white-space: nowrap; padding-left: 2px; line-height: 21px; color: #222; }
.combo-val.indent { padding-left: 7px; letter-spacing: .3px; }
.combo-val.up { line-height: 18px; }
.combo-arrow { width: 21px; flex: none; background: #f0f0f0; border-right: 2px solid #8a8a8a; border-bottom: 2px solid #8a8a8a; position: relative; }
.combo-arrow::after { content: ""; position: absolute; left: 5px; top: 50%; margin-top: -2px; border: 4px solid transparent; border-top: 5px solid #111; border-bottom: 0; }
.combo-tex { width: 170px; height: 23px; margin: 3px 0 0 7px; }
.lbl-cur { margin-top: 5px; }
.combo-cur { width: 170px; height: 26px; margin: 3px 0 0 7px; }
.combo-cur .combo-val { line-height: 22px; }
.tex-row { display: flex; margin: 8px 0 0 7px; }
.tex-preview { width: 93px; height: 99px; flex: none; border-top: 2px solid #8a9aa8; border-left: 2px solid #8a9aa8; background-color: #47627a; background-image: linear-gradient(#5a7890, #5a7890), linear-gradient(#5a7890, #5a7890); background-size: 1px 100%, 100% 1px; background-position: 46px 0, 0 48px; background-repeat: no-repeat; }
.tex-side { margin-left: 4px; }
.tex-size { line-height: 16px; margin: 3px 0 0 1px; color: #222; }
.tex-browse { width: 75px; height: 28px; margin-top: 16px; }
.tex-replace { width: 75px; height: 28px; margin-top: 7px; border: 2px solid #6a6a6a; border-left-color: #9a9a9a; border-top-color: #9a9a9a; }

.vis-panel { height: 275px; padding: 3px 0 0 5px; margin-top: 1px; }
.tabs { display: flex; align-items: flex-end; height: 24px; margin: 4px 0 0 1px; }
.tab { height: 22px; width: 50px; line-height: 20px; padding-left: 4px; border-right: 2px solid #9a9a9a; border-left: 1px solid #fafafa; border-top: 1px solid #fafafa; color: #222; }
.tab-on { height: 24px; width: 55px; padding-left: 8px; }
.vis-box { width: 177px; height: 198px; border-right: 2px solid #8a8a8a; border-bottom: 2px solid #8a8a8a; border-top: 1px solid #fafafa; padding: 4px 5px 3px 4px; background: #f0f0f0; }
.vis-list { width: 100%; height: 100%; background: #fff; border-top: 2px solid #8a8a8a; border-left: 2px solid #8a8a8a; border-right: 1px solid #e4e4e4; border-bottom: 1px solid #e4e4e4; }
.vis-btns { display: flex; margin: 7px 0 0 -4px; height: 21px; }
.vis-btns .wbtn { height: 21px; }
.v-show { width: 45px; }
.v-edit { width: 44px; margin-left: 1px; }
.v-mark { width: 45px; margin-left: 3px; }
.v-arrow { width: 21px; margin-left: 3px; }
.v-arrow + .v-arrow { margin-left: 2px; }
.v-arrow svg { width: 12px; height: 14px; }

.move-panel { height: 204px; padding: 2px 0 0 6px; }
.move-row { display: flex; height: 30px; align-items: flex-start; }
.move-lbl { width: 56px; line-height: 16px; margin-top: 1px; color: #222; white-space: nowrap; }
.mv-world { width: 60px; height: 28px; margin-top: 2px; }
.mv-entity { width: 60px; height: 28px; margin-left: 3px; margin-top: 2px; }
.lbl-cat { margin: 9px 0 0 1px; }
.combo-cat { width: 176px; height: 23px; margin-top: 3px; }
.lbl-obj { margin-top: 7px; }
.combo-obj { width: 176px; height: 26px; margin-top: 4px; }
.spin-row { display: flex; margin: 5px 0 0 49px; }
.spin-edit { width: 42px; height: 28px; border-top: 2px solid #8a8a8a; border-left: 2px solid #8a8a8a; padding-left: 2px; line-height: 18px; color: #888; background: #eee; }
.spin-btns { display: flex; flex-direction: column; gap: 2px; margin-left: 1px; }
.spin-b { width: 21px; height: 13px; background: #f0f0f0; border-right: 1px solid #888; border-bottom: 1px solid #888; display: flex; align-items: center; justify-content: center; }
.tri-up, .tri-dn { display: block; border: 2.5px solid transparent; }
.tri-up { border-bottom: 3px solid #999; border-top: 0; }
.tri-dn { border-top: 3px solid #999; border-bottom: 0; }
.prefab { width: 134px; height: 27px; margin: 4px 0 0 21px; }

.manifest-head { height: 21px; padding-left: 9px; line-height: 20px; background: #f0f0f0; border-bottom: 2px solid #9a9a9a; margin-left: 1px; color: #222; }
.manifest-body { height: 253px; margin-left: 1px; background: #f0f0f0; border-left: 3px solid #9a9a9a; }

/* status */
.status { height: 24px; flex: none; background: #f0f0f0; border-top: 2px solid #c4c4c4; display: grid; gap: 3px; padding-top: 2px; grid-template-columns: 804px 381px 133px 231px 107px 176px 66px; font-family: "Open Sans", sans-serif; font-size: 13.5px; color: #222; }
.st { border-top: 2px solid #c2c2c2; border-left: 2px solid #c2c2c2; padding-left: 2px; line-height: 18px; white-space: pre; overflow: hidden; }
.st-plain { border: 0; line-height: 20px; padding-left: 2px; }
.st-snap { padding-left: 4px; }
.st-mono { font-family: "Liberation Mono", monospace; font-weight: bold; font-size: 11px; }

.watermark { position: absolute; left: 1599px; top: 935px; pointer-events: none; font-family: "Open Sans", sans-serif; color: #c6c6c6; }
.wm-big { font-size: 18.5px; line-height: 26px; }
.wm-small { font-size: 14.2px; line-height: 20px; }
.loadbar { position: absolute; left: 809px; top: 0; width: 300px; height: 1px; background: linear-gradient(to right, #0a78d0 0 60px, #222 60px); }
```
